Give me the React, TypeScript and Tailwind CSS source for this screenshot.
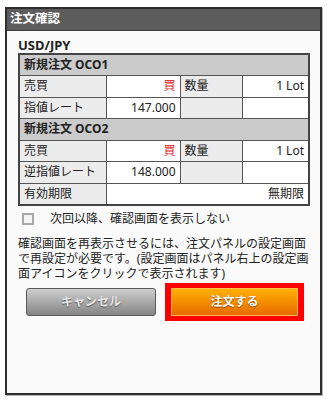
const FONT = '"Noto Sans", "Noto Sans CJK JP", sans-serif';

function Row({ cells }: { cells: React.ReactNode }) {
  return <tr className="h-[21.5px]">{cells}</tr>;
}

const label = 'border border-[#555] bg-[#ececec] px-[4px] text-left font-normal';
const value = 'border border-[#555] bg-white px-[4px] text-right';
const head = 'border border-[#555] bg-[#cbcbcb] px-[4px] text-left font-bold';

function OrderBlock({ title, rateLabel, rate }: { title: string; rateLabel: string; rate: string }) {
  return (
    <>
      <Row cells={<td colSpan={4} className={head}>{title}</td>} />
      <Row
        cells={
          <>
            <td className={label}>売買</td>
            <td className={value}><span className="text-[#e0201c]">買</span></td>
            <td className={label}>数量</td>
            <td className={value}>1 Lot</td>
          </>
        }
      />
      <Row
        cells={
          <>
            <td className={label}>{rateLabel}</td>
            <td className={value}>{rate}</td>
            <td className={label}></td>
            <td className={value}></td>
          </>
        }
      />
    </>
  );
}

export default function App() {
  return (
    <div className="w-[327px] h-[399px] bg-white pt-[7px] pl-[5px]" style={{ fontFamily: FONT }}>
      <div className="w-[317px] h-[388px] bg-[#fafafa] border-2 border-[#2e2e2e] shadow-[1px_1px_0_#b5b5b5] flex flex-col text-[12px] text-[#222]">
        {/* Header */}
        <div className="h-[22px] bg-[#5c5c5c] border-b border-[#3a3a3a] flex items-center pl-[3px]">
          <span className="text-white font-bold text-[12.5px] leading-none">注文確認</span>
        </div>

        <div className="pl-[11px] pr-[9px] flex flex-col">
          <div className="h-[22px] flex items-end pb-[1px] font-bold text-[13px] leading-none">USD/JPY</div>

          <table className="border-collapse border-2 border-[#444] w-[290px] table-fixed leading-none">
            <colgroup>
              <col className="w-[87px]" />
              <col className="w-[74px]" />
              <col className="w-[62px]" />
              <col className="w-[67px]" />
            </colgroup>
            <tbody>
              <OrderBlock title="新規注文 OCO1" rateLabel="指値レート" rate="147.000" />
              <OrderBlock title="新規注文 OCO2" rateLabel="逆指値レート" rate="148.000" />
              <Row
                cells={
                  <>
                    <td className={label}>有効期限</td>
                    <td colSpan={3} className={value}>無期限</td>
                  </>
                }
              />
            </tbody>
          </table>

          {/* Checkbox */}
          <div className="flex items-center mt-[7px] h-[13px]">
            <span className="ml-[4px] w-[12px] h-[12px] border-2 border-[#a8a8a8] bg-[#f4f4f4]" />
            <span className="ml-[16px] leading-none">次回以降、確認画面を表示しない</span>
          </div>

          {/* Notice */}
          <div className="mt-[10px] leading-[15px] whitespace-nowrap">
            <div>確認画面を再表示させるには、注文パネルの設定画面</div>
            <div>で再設定が必要です。(設定画面はパネル右上の設定画</div>
            <div>面アイコンをクリックで表示されます)</div>
          </div>

          {/* Buttons */}
          <div className="flex items-center mt-[2px]">
            <button className="ml-[8px] w-[130px] h-[28px] rounded-[3px] border border-[#5a5a5a] bg-gradient-to-b from-[#cfcfcf] to-[#858585] text-[#e6e6e6] font-bold text-[12px] [text-shadow:0_1px_1px_#555]">
              キャンセル
            </button>
            <div className="ml-[9px] border-[6px] border-[#ff0000] border-y-[5px]">
              <button className="w-[127px] h-[28px] border border-[#ffc04d] bg-gradient-to-b from-[#ffb000] to-[#e76a00] text-white font-bold text-[12px] [text-shadow:0_1px_1px_#8a4000]">
                注文する
              </button>
            </div>
          </div>
        </div>
      </div>
    </div>
  );
}
